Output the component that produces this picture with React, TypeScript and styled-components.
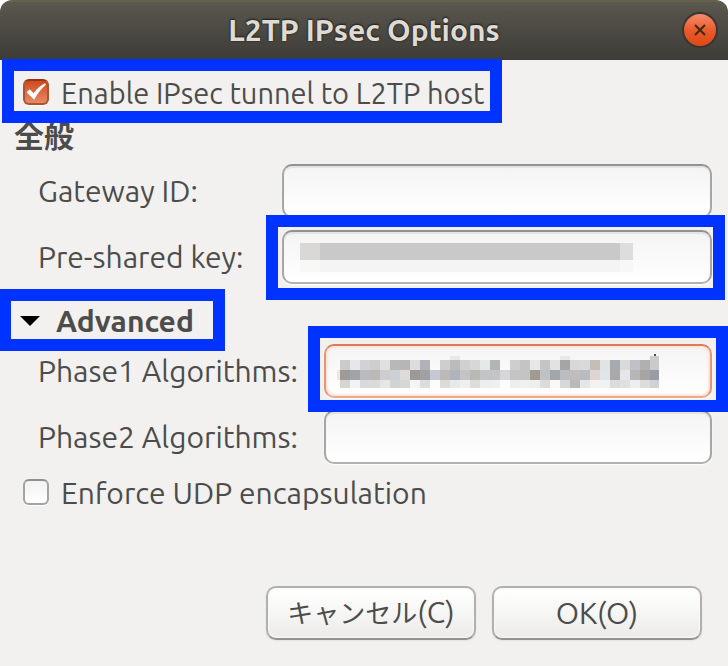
import React, { useState } from "react";
import styled, { createGlobalStyle, css } from "styled-components";

const GlobalStyle = createGlobalStyle`
  *, *::before, *::after { box-sizing: border-box; }
  html { background: #ffffff; }
  body {
    margin: 0;
    color: #4c4c4c;
    font-family: Ubuntu, "Noto Sans", "Noto Sans CJK JP", sans-serif;
    font-size: 30px;
    line-height: 40px;
  }
  button, input { font: inherit; color: inherit; }
`;

const Dialog = styled.main`
  display: flex;
  flex-direction: column;
  min-height: 100vh;
  overflow: hidden;
  border-radius: 12px 12px 0 0;
  background: #f2f1ef;
`;

const TitleBar = styled.header`
  display: grid;
  grid-template-columns: 1fr auto 1fr;
  align-items: center;
  height: 60px;
  padding: 0 10px 2px;
  background: linear-gradient(#5d594e 0, #55524a 10px, #3d3c38 100%);
  border-top: 2px solid #65614f;
`;

const Title = styled.h1`
  grid-column: 2;
  margin: 0;
  color: #dfdbd2;
  font-size: 30px;
  font-weight: 700;
  white-space: nowrap;
  text-shadow: 0 0 2px #22211f, 0 -1px 2px #22211f;
`;

const CloseButton = styled.button`
  display: grid;
  place-items: center;
  justify-self: end;
  width: 36px;
  height: 36px;
  padding: 0;
  border: 2px solid #373632;
  border-radius: 50%;
  background: linear-gradient(#f68d6c, #ea5b2c 50%, #dd4814);
`;

const Body = styled.form`
  display: flex;
  flex-direction: column;
  flex: 1;
  padding: 8px 16px 26px 14px;
`;

const Highlight = styled.span<{ $inset: string }>`
  position: absolute;
  inset: ${(p) => p.$inset};
  z-index: 2;
  border: 12px solid #0033ff;
  pointer-events: none;
`;

const CheckRow = styled.div<{ $compact: boolean }>`
  position: relative;
  display: flex;
  align-items: center;
  align-self: flex-start;
  gap: 12px;
  height: 48px;
  padding-left: 9px;
  font-size: ${(p) => (p.$compact ? 29 : 30)}px;
  white-space: nowrap;
`;

const CheckBox = styled.input`
  appearance: none;
  flex: none;
  display: grid;
  place-items: center;
  width: 26px;
  height: 26px;
  margin: 0;
  border: 2px solid #a3a3a1;
  border-top-color: #8f8f8d;
  border-radius: 6px;
  background: linear-gradient(#f2f2f2, #ffffff);
  box-shadow: 0 1px 1px #ffffff;

  &:checked {
    border-color: #ab5434;
    border-top-color: #90381a;
    background: linear-gradient(#cf4a1b, #e88a66);
  }
`;

const CheckHolder = styled.span`
  position: relative;
  display: grid;
`;

const TickMark = styled.svg`
  position: absolute;
  inset: 0;
  pointer-events: none;
`;

const CheckLabel = styled.label`
  padding-top: 2px;
`;

const SectionTitle = styled.h2`
  margin: 0 0 8px;
  font-size: 30px;
  font-weight: 700;
  line-height: 40px;
`;

const FieldGrid = styled.div<{ $labelWidth: number }>`
  display: grid;
  grid-template-columns: ${(p) => p.$labelWidth}px 1fr;
  gap: 12px;
  align-items: center;
  padding-left: 24px;
`;

const Label = styled.label`
  white-space: nowrap;
`;

const EntryHolder = styled.div`
  position: relative;
  display: grid;
`;

const Entry = styled.input<{ $active?: boolean }>`
  width: 100%;
  height: 54px;
  padding: 0 16px;
  border: 2px solid #a6a6a5;
  border-top-color: #929290;
  border-bottom-color: #b2b2b0;
  border-radius: 10px;
  outline: none;
  background: linear-gradient(#f4f4f4, #ffffff);
  box-shadow: inset 0 2px 1px #e2e4e2, 0 1px 2px #ffffff;

  ${(p) =>
    p.$active &&
    css`
      border-color: #e69473;
      border-top-color: #dc7c58;
      border-bottom-color: #eba88d;
      box-shadow: inset 0 0 2px 2px #fae5dc, 0 1px 2px #ffffff;
    `}
`;

const Mosaic = styled.svg`
  position: absolute;
  top: 10px;
  left: 12px;
  pointer-events: none;
`;

const Expander = styled.button`
  position: relative;
  display: flex;
  align-items: center;
  align-self: flex-start;
  gap: 16px;
  height: 48px;
  margin-top: 12px;
  padding: 2px 0 0 6px;
  border: 0;
  background: none;
  font-weight: 700;
`;

const Actions = styled.footer`
  display: flex;
  justify-content: flex-end;
  gap: 16px;
  margin-top: auto;
  padding: 0 10px 0 0;
`;

const ActionButton = styled.button`
  width: 210px;
  height: 54px;
  padding: 0;
  border: 2px solid #b0b0ae;
  border-bottom-color: #929290;
  border-radius: 10px;
  background: linear-gradient(#ffffff, #f6f6f5 50%, #ebeae8);
  box-shadow: inset 0 0 2px 1px #f8f8f8, 0 1px 2px #e2e2e0;
`;

const Kana = styled.span`
  font-size: 26px;
`;

const Spacer = styled.div`
  height: 4px;
`;

const mosaicRows = [
  {
    y: 6,
    height: 10,
    colors:
      "cbcbca e6e7e8 d0d2d5 d0cecc e0e0e0 b6b8ba b8b6b4 dedddb b0b2b7 - d0cecc babbbb cfd0d2 d8d7d5 e5e9e8 b3b4b5 - cfcecd c4c4c4 e6e7e9 c5c5c5 e0e2e4 a4a5a7 dad8d7 d8d9da c4beb8 e2e4e3 a5a9b0 dbd9d7 bfc1c6 b2b0ae c9cacb",
  },
  {
    y: 16,
    height: 10,
    colors:
      "9e9a96 9fa3aa babbc1 bcb8b6 cccdd0 cbd0d5 dddcd8 9d9996 a0a1a3 c5c9d1 bdb9b6 b0b3ba c4c4c5 b9b8b5 c2c5c8 c2c4c5 d6d5d7 c3c5c5 c4c4c2 a09a92 bfc1c3 9fa7ad bbbdc0 bebebe babbbc dfd5ce dfe5ea aaa7a6 e4e6ea b6b6b5 a8a4a2 989da5",
  },
  {
    y: 26,
    height: 8,
    colors:
      "d6d5d2 f0f4f5 d8dadd dcdad7 e6e6e3 d1d4d6 d6d6d5 f2f5f6 dcdcdb - dddbd8 e6eaec eff0ee dddcd8 ebedef eeefef - ededed f0f0ee eeeeec dadbdd faf8f5 d5d8db bab9b8 e4e6e9 f3f2f1 eff2f3 d9dbde e2e0de ebedf0 dcdddb cfd1d3",
  },
];

function AlgorithmMosaic() {
  return (
    <Mosaic width="324" height="36" shapeRendering="crispEdges" aria-hidden="true">
      <rect x="1" y="16" width="3" height="10" fill="#f3e6da" />
      {mosaicRows.map((row) =>
        row.colors.split(" ").map((color, i) =>
          color === "-" ? null : (
            <rect
              key={`${row.y}-${i}`}
              x={4 + i * 10}
              y={row.y}
              width={i === 31 ? 9 : 10}
              height={row.height}
              fill={`#${color}`}
            />
          ),
        ),
      )}
      <rect x="114" y="2" width="10" height="4" fill="#e8e8e9" />
      <rect x="224" y="2" width="10" height="4" fill="#e8e8e8" />
      <rect x="314" y="2" width="9" height="4" fill="#cccccc" />
      <rect x="318" y="0" width="2" height="2" fill="#4c4c4c" />
    </Mosaic>
  );
}

function KeyMosaic() {
  return (
    <Mosaic width="340" height="36" shapeRendering="crispEdges" aria-hidden="true">
      <rect x="6" y="3" width="20" height="17" fill="#d9d8d7" />
      <rect x="26" y="3" width="300" height="17" fill="#c9c9c9" />
      <rect x="326" y="3" width="13" height="17" fill="#dcdddf" />
      <rect x="6" y="20" width="20" height="12" fill="#f8f8f6" />
      <rect x="26" y="20" width="300" height="12" fill="#f4f4f4" />
      <rect x="326" y="20" width="13" height="12" fill="#f7f7f7" />
    </Mosaic>
  );
}

type CheckProps = {
  id: string;
  label: string;
  initial?: boolean;
  compact?: boolean;
  children?: React.ReactNode;
};

function Check({ id, label, initial = false, compact = false, children }: CheckProps) {
  const [checked, setChecked] = useState(initial);
  return (
    <CheckRow $compact={compact}>
      <CheckHolder>
        <CheckBox
          id={id}
          type="checkbox"
          checked={checked}
          onChange={(e) => setChecked(e.target.checked)}
        />
        {checked && (
          <TickMark width="26" height="26" viewBox="0 0 26 26" aria-hidden="true">
            <path
              d="M3.5 13.2 L6.8 10.2 L10.6 14.2 C13.8 9.8 17 6.8 22.2 4.2 L22.8 5.8 C18 10 14.4 14.6 11.2 20.8 Z"
              fill="#ffffff"
            />
          </TickMark>
        )}
      </CheckHolder>
      <CheckLabel htmlFor={id}>{label}</CheckLabel>
      {children}
    </CheckRow>
  );
}

export default function App() {
  const [expanded, setExpanded] = useState(true);
  return (
    <>
      <GlobalStyle />
      <Dialog>
        <TitleBar>
          <span />
          <Title>L2TP IPsec Options</Title>
          <CloseButton type="button" aria-label="Close">
            <svg width="14" height="14" viewBox="0 0 14 14" aria-hidden="true">
              <path d="M2 2 L12 12 M12 2 L2 12" stroke="#3c2a12" strokeWidth="2" />
            </svg>
          </CloseButton>
        </TitleBar>
        <Body onSubmit={(e) => e.preventDefault()}>
          <Check id="enable" label="Enable IPsec tunnel to L2TP host" initial compact>
            <Highlight $inset="-9px -18px -7px -12px" />
          </Check>
          <SectionTitle lang="ja">全般</SectionTitle>
          <FieldGrid $labelWidth={232}>
            <Label htmlFor="gateway">Gateway ID:</Label>
            <Entry id="gateway" type="text" />
            <Label htmlFor="psk">Pre-shared key:</Label>
            <EntryHolder>
              <Entry id="psk" type="password" />
              <KeyMosaic />
              <Highlight $inset="-15px -13px -16px -16px" />
            </EntryHolder>
          </FieldGrid>
          <Expander
            type="button"
            aria-expanded={expanded}
            onClick={() => setExpanded(!expanded)}
          >
            <svg width="20" height="10" viewBox="0 0 20 10" aria-hidden="true">
              <path d="M0 0 H20 L10 10 Z" fill="#000000" />
            </svg>
            Advanced
            <Highlight $inset="-7px -31px -7px -15px" />
          </Expander>
          {expanded && (
            <>
              <FieldGrid $labelWidth={274}>
                <Label htmlFor="phase1">Phase1 Algorithms:</Label>
                <EntryHolder>
                  <Entry id="phase1" type="text" $active />
                  <AlgorithmMosaic />
                  <Highlight $inset="-18px -16px -14px -16px" />
                </EntryHolder>
                <Label htmlFor="phase2">Phase2 Algorithms:</Label>
                <Entry id="phase2" type="text" />
              </FieldGrid>
              <Spacer />
              <Check id="udp" label="Enforce UDP encapsulation" />
            </>
          )}
          <Actions>
            <ActionButton type="button">
              <Kana lang="ja">キャンセル</Kana>(C)
            </ActionButton>
            <ActionButton type="submit">OK(O)</ActionButton>
          </Actions>
        </Body>
      </Dialog>
    </>
  );
}
